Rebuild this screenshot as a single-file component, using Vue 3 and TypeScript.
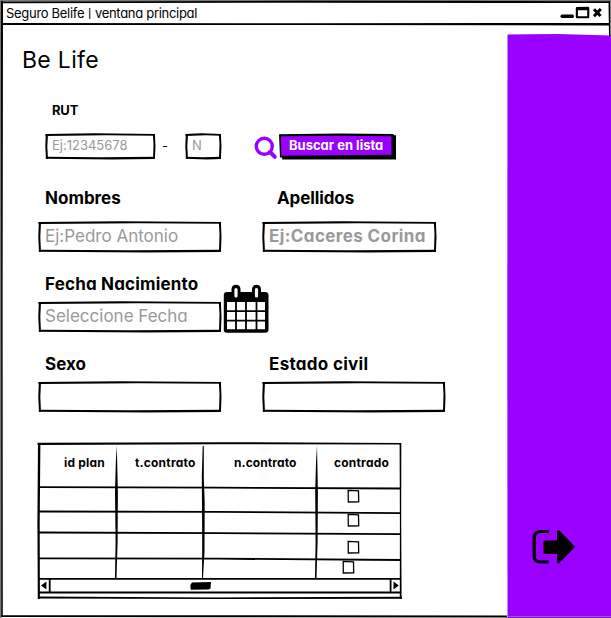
<script setup lang="ts">
import { h, type FunctionalComponent } from 'vue'

interface FrameProps {
  w: number
  h: number
}

/* Hand-drawn rectangle: four strokes with a slight wobble and uneven weight */
const SketchFrame: FunctionalComponent<FrameProps> = (p) => {
  const r = p.w - 1
  const b = p.h - 1
  const strokes = [
    `M.4 .9 L${p.w * 0.45} .2 L${r} .9 L${r} 2.800 L${p.w * 0.55} 2.300 L.6 3Z`,
    `M${r - 2.2} .9 L${r - 0.1} .9 L${r + 0.5} ${p.h * 0.5} L${r - 0.1} ${b} L${r - 2} ${b} L${r - 1.5} ${p.h * 0.4}Z`,
    `M.8 ${b - 2.2} L${p.w * 0.5} ${b - 1.8} L${r} ${b - 2.3} L${r} ${b} L${p.w * 0.6} ${b + 0.4} L.8 ${b - 0.2}Z`,
    `M.8 .9 L3 .9 L2.300 ${p.h * 0.5} L3 ${b} L1 ${b} L.3 ${p.h * 0.5}Z`,
  ]
  return h(
    'svg',
    { width: p.w, height: p.h, viewBox: `0 0 ${p.w} ${p.h}`, 'aria-hidden': 'true' },
    strokes.map((d) => h('path', { d, fill: '#000' })),
  )
}
SketchFrame.props = ['w', 'h']

const columns: string[] = ['id plan', 't.contrato', 'n.contrato', 'contrado']
const rows: string[] = ['r1', 'r2', 'r3', 'r4']
</script>

<template>
  <div class="window">
    <header class="titlebar">
      <span class="caption">Seguro Belife <span class="bar">|</span> ventana principal</span>
      <svg class="controls" width="46" height="14" viewBox="0 0 46 14">
        <path d="M2 8.500h10.500q1.500 0 1.500 1.800t-1.500 1.800h-10.500q-1.500 0-1.500-1.800t1.500-1.800z" />
        <path fill-rule="evenodd" d="M17 1 28 .8q1.300 0 1.300 1.200v9q0 1.300-1.300 1.300H17q-1.200 0-1.200-1.300V2Q15.800 1 17 1zM17.900 4.200v6h9.300V4.200z" />
        <path d="M34 3.200l6.500 6.800M40.800 3l-6.800 7.200" fill="none" stroke="#000" stroke-width="3" />
      </svg>
    </header>

    <div class="body">
      <main class="form">
        <h1>Be Life</h1>

        <div class="label small rut">RUT</div>
        <div class="search-row">
          <div class="field f-rut"><SketchFrame :w="111" :h="27" /><span>Ej:12345678</span></div>
          <span class="dash">-</span>
          <div class="field f-dv"><SketchFrame :w="37" :h="27" /><span>N</span></div>
          <svg class="lens" width="24" height="24" viewBox="0 0 24 24">
            <circle cx="10.300" cy="10.300" r="8" fill="none" stroke="#9900ff" stroke-width="3.400" />
            <path d="M16 16l4.800 4.800" stroke="#9900ff" stroke-width="4" stroke-linecap="round" />
          </svg>
          <button type="button" class="btn">
            <svg width="118" height="28" viewBox="0 0 118 28" aria-hidden="true">
              <path d="M0 1.200 60 .5 114 1l1.500 1.200H117V26.500H3.200V24.500H1z" fill="#000" />
              <path d="M2 3.200 60 2.700 112.500 3.300V21.700L50 22.200 2.300 22.700z" fill="#9900ff" />
            </svg>
            <span>Buscar en lista</span>
          </button>
        </div>

        <div class="row names">
          <div class="col">
            <div class="label l-nombres">Nombres</div>
            <div class="field"><SketchFrame :w="184" :h="32" /><span>Ej:Pedro Antonio</span></div>
          </div>
          <div class="col">
            <div class="label l-apellidos">Apellidos</div>
            <div class="field strong"><SketchFrame :w="175" :h="32" /><span>Ej:Caceres Corina</span></div>
          </div>
        </div>

        <div class="row date">
          <div class="col">
            <div class="label l-fecha">Fecha Nacimiento</div>
            <div class="field"><SketchFrame :w="184" :h="32" /><span>Seleccione Fecha</span></div>
          </div>
          <svg class="calendar" width="46" height="49" viewBox="0 0 46 49">
            <path
              fill-rule="evenodd"
              d="M4 8H8.500V5Q9 .8 13 .8T17.500 5V8H29V5Q29.500 .8 33.500 .8T38 5V8H42Q45.500 8 45.500 11V46Q45.500 48.800 42 48.800H4Q.8 48.800 .8 46V11Q.8 8 4 8zM4 18V45.200H42V18z"
            />
            <path d="M13 5.500V12M33.500 5.500V12" stroke="#fff" stroke-width="3.200" stroke-linecap="round" />
            <path
              d="M13 17V46M23 17V46M33.500 17V46M3 27.200H43M3 36.700H43"
              fill="none"
              stroke="#000"
              stroke-width="1.800"
            />
          </svg>
        </div>

        <div class="row civil">
          <div class="col">
            <div class="label l-sexo">Sexo</div>
            <div class="field"><SketchFrame :w="184" :h="32" /></div>
          </div>
          <div class="col">
            <div class="label l-estado">Estado civil</div>
            <div class="field"><SketchFrame :w="184" :h="32" /></div>
          </div>
        </div>

        <section class="table">
          <svg class="lines" width="366" height="158" viewBox="0 0 366 158" aria-hidden="true">
            <path d="M.5 .8 180 .2 364 1V2.600L180 2.300.500 3z" />
            <path d="M1 1H3.400L2.700 80 2.900 157H.8L.4 80z" />
            <path d="M362.600 1H364.300L364.200 80 364.600 157H362.800L362.900 80z" />
            <path d="M1 154.600 180 155.400 365 154.800V156.800L180 157 1 156.500z" />
            <path d="M79.800 3.500 80.900 50 80.600 100 79.500 136H78L78.600 100 78 50 78.800 20z" />
            <path d="M165.700 4H166.800V36L167.700 60 167.500 110 166 136H165L165.200 100 164.800 34z" />
            <path d="M280 3.500 280.900 50 280.600 100 279.500 136H278L278.600 100 278.200 50 279 20z" />
            <g fill="none" stroke="#000" stroke-width="1.800">
              <path d="M2 45.200 180 45.700 364 46.500" />
              <path d="M2 69.500 180 69.900 364 71.100" />
              <path d="M2 90.500 180 91.100 364 92.200" />
              <path d="M2 116.300 180 116.700 364 118" />
              <path d="M2 136.800H364" />
              <path d="M2 150.500H364" />
              <path d="M12.700 137V150.500M353.600 137V150.500" />
            </g>
            <path d="M4 143.500 9.400 139.500V147.500zM361.800 143.500 356.500 139.500V147.500z" />
            <path d="M155 140.500 174 139.900 173.500 146.400 171.500 147.500 153.800 147.700 153.300 143z" />
          </svg>
          <div class="grid head">
            <span v-for="(c, i) in columns" :key="c" :class="'h' + i">{{ c }}</span>
          </div>
          <div v-for="r in rows" :key="r" class="grid" :class="r">
            <span /><span /><span />
            <svg class="check" width="13" height="14" viewBox="0 0 13 14">
              <path d="M1.200 1.300 11.500 1.800 11.700 12.800 1.300 13z" fill="#fff" stroke="#000" stroke-width="1.300" />
            </svg>
          </div>
        </section>
      </main>

      <aside class="side">
        <svg class="side-bg" width="104" height="583" viewBox="0 0 104 583" aria-hidden="true">
          <path d="M.5.500 50 0 104 1.500V582.800H.5L.3 300z" fill="#9900ff" />
        </svg>
        <svg class="exit" width="44" height="36" viewBox="0 0 44 36">
          <path d="M17 2.500H9Q2.200 2.500 2.200 9V27Q2.200 33 9 33H17" fill="none" stroke="#000" stroke-width="3.200" />
          <path d="M13 11.500H25V3Q25 .5 27.500 1.500L43 17.800 27.500 34Q25 34.800 25 32V25H13Q11.500 25 11.500 23.500V13Q11.500 11.500 13 11.500z" />
        </svg>
      </aside>
    </div>

    <svg class="window-frame" width="611" height="618" viewBox="0 0 611 618" aria-hidden="true">
      <path d="M0 0H611V1.500H0z" fill="#777" />
      <path d="M0 0H1.200V618H0z" fill="#777" />
      <path d="M1 1.400 300 .8 610 1.200V3L300 2.700 1 3.200z" />
      <path d="M1 1H3L2.600 300 2.800 617H1.200z" />
      <path d="M1 23 300 23.300 609 23V25.500L300 24.900 1 24.900z" />
      <path d="M608.500 1.500H610.500V36H609z" />
      <path d="M1 615.200 507 615.500V617.500L1 617z" />
      <path d="M507 617H611V618H507z" fill="#64338c" />
    </svg>
  </div>
</template>

<style>
body {
  background: #fff;
  overflow: hidden;
}
</style>

<style scoped>
.window {
  position: relative;
  width: 611px;
  height: 618px;
  overflow: hidden;
  background: #fff;
  color: #000;
  font-family: Inter, 'Liberation Sans', sans-serif;
  font-feature-settings: 'cv11';
}
svg {
  display: block;
  flex: none;
}
.window-frame {
  position: absolute;
  inset: 0;
  pointer-events: none;
}
.titlebar {
  display: flex;
  align-items: center;
  justify-content: space-between;
  box-sizing: border-box;
  height: 25px;
  padding: 1px 5px 0 6px;
  font-size: 13px;
  letter-spacing: -0.3px;
  white-space: nowrap;
}
.bar {
  display: inline-block;
  transform: scaleY(0.72);
}
.body {
  display: flex;
  height: 593px;
}
.form {
  width: 507px;
  flex: none;
}
h1 {
  margin: 0 0 0 22px;
  height: 70px;
  line-height: 70px;
  font-size: 23px;
  font-weight: 400;
  letter-spacing: 0.3px;
}
.label {
  height: 30px;
  line-height: 30px;
  font-size: 17px;
  font-weight: 700;
  white-space: nowrap;
}
.small {
  font-size: 13px;
  letter-spacing: -0.2px;
}
.rut {
  margin-left: 52px;
}
.search-row {
  display: flex;
  align-items: flex-start;
  height: 28px;
  margin: 8px 0 22px 45px;
}
.field {
  display: grid;
  align-items: start;
  justify-items: start;
  color: #999;
  font-size: 17px;
  white-space: nowrap;
}
.field > * {
  grid-area: 1 / 1;
}
.field > span {
  margin-left: 7px;
  line-height: 30px;
}
.strong {
  font-weight: 700;
  letter-spacing: 0.4px;
}
.f-rut,
.f-dv {
  font-size: 13px;
}
.f-rut > span,
.f-dv > span {
  line-height: 25px;
}
.dash {
  width: 29px;
  padding-left: 6px;
  box-sizing: border-box;
  line-height: 26px;
  font-size: 13px;
}
.lens {
  margin: 3px 1px 0 32px;
}
.btn {
  display: grid;
  align-items: start;
  padding: 0;
  border: 0;
  background: none;
  color: #fff;
  font: inherit;
  font-size: 13px;
  font-weight: 700;
  line-height: 25px;
  white-space: nowrap;
}
.btn > * {
  grid-area: 1 / 1;
}
.btn > span {
  justify-self: start;
  margin-left: 10px;
}
.row {
  display: flex;
  align-items: flex-end;
  padding-left: 38px;
}
.names,
.civil {
  gap: 40px;
}
.names {
  margin-bottom: 16px;
}
.names .label {
  margin-bottom: 8px;
}
.date {
  gap: 1px;
  margin-bottom: 16px;
}
.date .label,
.civil .label {
  margin-bottom: 2px;
}
.civil {
  margin-bottom: 29px;
}
.l-nombres,
.l-fecha,
.l-sexo,
.l-estado {
  padding-left: 7px;
}
.l-apellidos {
  padding-left: 15px;
  letter-spacing: -0.1px;
}
.l-fecha {
  letter-spacing: 0.18px;
}
.l-estado {
  letter-spacing: 0.3px;
}
.table {
  position: relative;
  width: 366px;
  height: 158px;
  margin-left: 37px;
}
.lines {
  position: absolute;
  inset: 0;
}
.grid {
  position: relative;
  display: grid;
  grid-template-columns: 79px 87px 113px 87px;
}
.head {
  height: 46px;
  line-height: 41px;
  font-size: 12px;
  font-weight: 700;
  letter-spacing: 0.2px;
}
.h0 {
  padding-left: 27px;
}
.h1 {
  padding-left: 19px;
}
.h2 {
  padding-left: 31px;
  letter-spacing: 0.1px;
}
.h3 {
  padding-left: 18px;
}
.check {
  margin: 1px 0 0 31px;
}
.r1 {
  height: 24px;
}
.r2 {
  height: 22px;
}
.r3 {
  height: 26px;
}
.r4 {
  height: 20px;
}
.r3 .check {
  margin-top: 6px;
}
.r4 .check {
  margin-left: 26px;
  margin-top: 0;
}
.side {
  display: grid;
  width: 104px;
  flex: none;
  padding-top: 9px;
}
.side > * {
  grid-area: 1 / 1;
}
.exit {
  margin: 495px 0 0 25px;
}
</style>
